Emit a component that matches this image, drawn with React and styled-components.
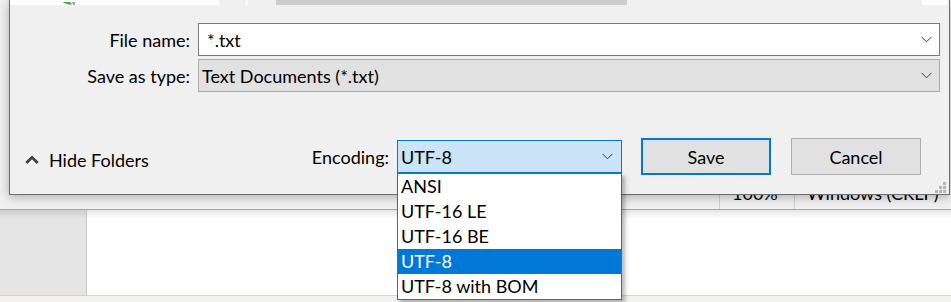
import React from 'react';
import styled, { createGlobalStyle } from 'styled-components';

const FONT = `Lato, "Open Sans", sans-serif`;

const GlobalStyle = createGlobalStyle`
  html, body {
    margin: 0;
    padding: 0;
    background: #f0f0f0;
  }
  * {
    box-sizing: border-box;
  }
`;

const Screen = styled.div`
    position: relative;
    width: 951px;
    height: 302px;
    overflow: hidden;
    font-family: ${FONT};
    font-size: 18px;
    color: #000;
    background: #f0f0f0;
`;

/* notepad window behind the dialog */
const Backdrop = styled.div`
    display: flex;
    flex-direction: column;
    height: 100%;
`;
const UpperArea = styled.div`
    height: 180px;
    background: #f0f0f0;
`;
const StatusBar = styled.div`
    display: flex;
    height: 30px;
    background: #f0f0f0;
    border-bottom: 1px solid #a3a3a3;
`;
const StatusSpacer = styled.div`
    flex: 1;
`;
const StatusCell = styled.div`
    width: ${p => p.$w}px;
    flex: none;
    border-left: 1px solid #d0d0d0;
    padding-left: 12px;
    line-height: 27px;
    white-space: nowrap;
`;
const Editor = styled.div`
    display: flex;
    height: 86px;
    border-bottom: 1px solid #d4d4d4;
`;
const Gutter = styled.div`
    width: 87px;
    border-right: 1px solid #c6c6c6;
    background: linear-gradient(to bottom, rgba(0, 0, 0, .1), rgba(0, 0, 0, 0) 9px), #e5e5e5;
`;
const TextArea = styled.div`
    flex: 1;
    background: linear-gradient(to bottom, rgba(0, 0, 0, .1), rgba(0, 0, 0, 0) 9px), #fff;
`;
const BottomStrip = styled.div`
    flex: 1;
    background: #f3f2f1;
`;

/* save dialog */
const Dialog = styled.div`
    position: absolute;
    left: 9px;
    top: 0;
    width: 941px;
    height: 195px;
    display: flex;
    flex-direction: column;
    background: #f0f0f0;
    border: 1px solid #6f6f6f;
    border-top: none;
    box-shadow: 0 2px 10px rgba(0, 0, 0, .28);
`;
const PaneStrip = styled.div`
    display: flex;
    height: 5px;
    flex: none;
`;
const PaneBit = styled.div`
    width: ${p => (p.$w ? `${p.$w}px` : 'auto')};
    flex: ${p => (p.$w ? 'none' : '1')};
    background: ${p => p.$bg};
    padding-left: ${p => p.$pad || 0}px;
    overflow: hidden;
    line-height: 0;
`;

const Form = styled.div`
    display: grid;
    grid-template-columns: 180px 742px;
    column-gap: 8px;
    row-gap: 3px;
    margin-top: 18px;
    align-items: center;
`;
const Label = styled.div`
    text-align: right;
    white-space: nowrap;
`;
const Field = styled.div`
    display: flex;
    align-items: center;
    height: 33px;
    background: ${p => p.$bg};
    border: 1px solid ${p => p.$border};
    padding-left: ${p => p.$pad}px;
    padding-right: 7px;
`;
const FieldText = styled.div`
    flex: 1;
    white-space: nowrap;
`;

const Footer = styled.div`
    display: flex;
    align-items: center;
    margin-top: auto;
    padding: 0 28px 19px 15px;
`;
const HideFolders = styled.div`
    display: flex;
    align-items: center;
    gap: 10px;
    margin-top: 6px;
`;
const RightGroup = styled.div`
    display: flex;
    align-items: center;
    margin-left: auto;
`;
const EncodingLabel = styled.div`
    margin-right: 8px;
`;
const Combo = styled.div`
    position: relative;
    display: flex;
    align-items: center;
    width: 225px;
    height: 33px;
    padding: 0 8px 0 3px;
    background: #cce4f7;
    border: 1px solid #0078d7;
`;
const DropList = styled.div`
    position: absolute;
    top: calc(100% + 1px);
    left: -1px;
    width: calc(100% + 2px);
    background: #fff;
    border: 1px solid #646464;
    box-shadow: 3px 3px 4px rgba(0, 0, 0, .28);
    z-index: 5;
`;
const Option = styled.div`
    height: 25px;
    line-height: 25px;
    padding-left: 3px;
    white-space: nowrap;
    background: ${p => (p.$selected ? '#0078d7' : 'transparent')};
    color: ${p => (p.$selected ? '#fff' : '#000')};
`;
const Button = styled.div`
    display: flex;
    align-items: center;
    justify-content: center;
    width: 130px;
    height: 37px;
    margin-left: ${p => p.$gap}px;
    background: #e1e1e1;
    border: ${p => (p.$default ? '2px solid #0078d7' : '1px solid #adadad')};
`;
const Grip = styled.div`
    position: absolute;
    right: 3px;
    bottom: 1px;
    line-height: 0;
`;

const ChevronDown = () => (
    <svg width="11" height="7" viewBox="0 0 11 7">
        <path d="M0.5 0.8 L5.5 5.8 L10.5 0.8" fill="none" stroke="#3a3a3a" strokeWidth="1" />
    </svg>
);

const ChevronUp = () => (
    <svg width="14" height="9" viewBox="0 0 14 9">
        <path d="M1.3 8 L7 2.3 L12.7 8" fill="none" stroke="#3c3c3c" strokeWidth="2.6" />
    </svg>
);

const NavIcon = () => (
    <svg width="14" height="5" viewBox="0 0 14 5">
        <path d="M0 0 H8 L10.5 2.6 H6.5 Z" fill="#3fae49" />
        <path d="M9.5 0 H13 V3.4 H11.5 Z" fill="#a9a9a9" />
    </svg>
);

const GripDots = () => (
    <svg width="12" height="12" viewBox="0 0 12 12" fill="#b5b5b5">
        <rect x="9" y="1" width="3" height="3" />
        <rect x="5" y="5" width="3" height="3" />
        <rect x="9" y="5" width="3" height="3" />
        <rect x="1" y="9" width="3" height="3" />
        <rect x="5" y="9" width="3" height="3" />
        <rect x="9" y="9" width="3" height="3" />
    </svg>
);

const encodings = ['ANSI', 'UTF-16 LE', 'UTF-16 BE', 'UTF-8', 'UTF-8 with BOM'];

export default function App() {
    const selected = 'UTF-8';
    return (
        <Screen>
            <GlobalStyle />
            <Backdrop>
                <UpperArea />
                <StatusBar>
                    <StatusSpacer />
                    <StatusCell $w={75}>100%</StatusCell>
                    <StatusCell $w={157}>Windows (CRLF)</StatusCell>
                </StatusBar>
                <Editor>
                    <Gutter />
                    <TextArea />
                </Editor>
                <BottomStrip />
            </Backdrop>

            <Dialog>
                <PaneStrip>
                    <PaneBit $w={209} $bg="#fff" $pad={52}><NavIcon /></PaneBit>
                    <PaneBit $w={26} $bg="#f0f0f0" />
                    <PaneBit $w={3} $bg="#fafafa" />
                    <PaneBit $w={28} $bg="#f0f0f0" />
                    <PaneBit $w={351} $bg="#cdcdcd" />
                    <PaneBit $bg="#f0f0f0" />
                    <PaneBit $w={25} $bg="#fff" />
                    <PaneBit $w={2} $bg="#f0f0f0" />
                </PaneStrip>

                <Form>
                    <Label>File name:</Label>
                    <Field $bg="#fff" $border="#7a7a7a" $pad={8}>
                        <FieldText>*.txt</FieldText>
                        <ChevronDown />
                    </Field>
                    <Label>Save as type:</Label>
                    <Field $bg="#e1e1e1" $border="#adadad" $pad={3}>
                        <FieldText>Text Documents (*.txt)</FieldText>
                        <ChevronDown />
                    </Field>
                </Form>

                <Footer>
                    <HideFolders>
                        <ChevronUp />
                        Hide Folders
                    </HideFolders>
                    <RightGroup>
                        <EncodingLabel>Encoding:</EncodingLabel>
                        <Combo>
                            <FieldText>{selected}</FieldText>
                            <ChevronDown />
                            <DropList>
                                {encodings.map(e => (
                                    <Option key={e} $selected={e === selected}>{e}</Option>
                                ))}
                            </DropList>
                        </Combo>
                        <Button $default $gap={19}>Save</Button>
                        <Button $gap={20}>Cancel</Button>
                    </RightGroup>
                </Footer>

                <Grip><GripDots /></Grip>
            </Dialog>
        </Screen>
    );
}
